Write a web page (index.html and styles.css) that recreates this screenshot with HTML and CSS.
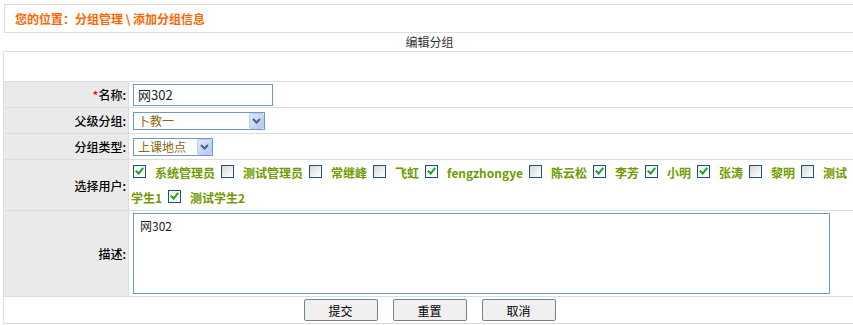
FILE: index.html
```html
<!DOCTYPE html>
<html lang="zh-CN">
<head>
    <meta charset="UTF-8">
    <meta name="viewport" content="width=device-width, initial-scale=1.0">
    <title>添加分组信息</title>
    <link rel="stylesheet" href="styles.css">
</head>
<body>
    <div class="crumb">您的位置：分组管理 \ 添加分组信息</div>

    <table class="form-table">
        <caption>编辑分组</caption>
        <colgroup>
            <col class="col-label">
            <col>
        </colgroup>
        <tr class="row-blank"><td colspan="2"></td></tr>
        <tr class="row-field">
            <th><span class="req">*</span>名称:</th>
            <td><input type="text" class="text-input" value="网302"></td>
        </tr>
        <tr class="row-field">
            <th>父级分组:</th>
            <td>
                <span class="sel sel-wide">
                    <select><option>卜教一</option></select>
                    <span class="sel-btn"><svg width="9" height="6" viewBox="0 0 9 6"><path d="M1 1 L4.5 4.5 L8 1" fill="none" stroke="#4d6185" stroke-width="2"/></svg></span>
                </span>
            </td>
        </tr>
        <tr class="row-field">
            <th>分组类型:</th>
            <td>
                <span class="sel sel-narrow">
                    <select><option>上课地点</option></select>
                    <span class="sel-btn"><svg width="9" height="6" viewBox="0 0 9 6"><path d="M1 1 L4.5 4.5 L8 1" fill="none" stroke="#4d6185" stroke-width="2"/></svg></span>
                </span>
            </td>
        </tr>
        <tr>
            <th>选择用户:</th>
            <td class="users"><input type="checkbox" class="cb" checked><span class="user">系统管理员</span><input type="checkbox" class="cb"><span class="user">测试管理员</span><input type="checkbox" class="cb"><span class="user">常继峰</span><input type="checkbox" class="cb"><span class="user">飞虹</span><input type="checkbox" class="cb" checked><span class="user">fengzhongye</span><input type="checkbox" class="cb"><span class="user">陈云松</span><input type="checkbox" class="cb" checked><span class="user">李芳</span><input type="checkbox" class="cb" checked><span class="user">小明</span><input type="checkbox" class="cb" checked><span class="user">张涛</span><input type="checkbox" class="cb"><span class="user">黎明</span><input type="checkbox" class="cb"><span class="user">测试学生1</span><input type="checkbox" class="cb" checked><span class="user">测试学生2</span></td>
        </tr>
        <tr class="row-desc">
            <th>描述:</th>
            <td><textarea class="desc">网302</textarea></td>
        </tr>
        <tr class="row-actions">
            <td colspan="2">
                <div class="actions">
                    <button type="submit" class="btn">提交</button>
                    <button type="reset" class="btn">重置</button>
                    <button type="button" class="btn">取消</button>
                </div>
            </td>
        </tr>
    </table>
</body>
</html>
```

FILE: styles.css
```css
html, body {
    overflow: hidden;
}
body {
    margin: 0;
    font-family: "Noto Sans CJK SC", "Noto Sans", sans-serif;
    font-size: 12px;
    color: #000;
    background: #fff;
}
.crumb {
    margin: 4px 0 0 4px;
    width: 860px;
    height: 27px;
    line-height: 27px;
    padding-left: 10px;
    border: 1px solid #ddd;
    color: #ff6600;
    font-weight: bold;
}
.form-table {
    margin-left: 3px;
    width: 853px;
    border-collapse: collapse;
    table-layout: fixed;
}
.form-table caption {
    height: 18px;
    line-height: 18px;
    color: #333;
}
.col-label {
    width: 125px;
}
.form-table th,
.form-table td {
    border: 1px solid #ddd;
    padding: 0;
}
.form-table th {
    background: #eaeaea;
    text-align: right;
    font-weight: 500;
    padding-right: 2px;
}
.form-table td {
    padding-left: 2px;
}
.row-blank td {
    height: 29px;
}
.row-field th,
.row-field td {
    height: 25px;
}
.row-desc th,
.row-desc td {
    height: 85px;
}
.form-table .row-actions td {
    height: 26px;
    padding: 0;
}
.req {
    color: #f00;
}
.text-input {
    box-sizing: border-box;
    width: 140px;
    height: 22px;
    margin: 0 0 0 2px;
    padding: 0 4px;
    border: 1px solid #6f99c8;
    font-family: inherit;
    font-size: 13px;
    color: #222;
    vertical-align: middle;
}
.sel {
    position: relative;
    display: inline-block;
    margin-left: 2px;
    vertical-align: middle;
}
.sel select {
    appearance: none;
    box-sizing: border-box;
    height: 18px;
    margin: 0;
    padding: 0 0 0 4px;
    border: 1px solid #6f99c8;
    border-radius: 0;
    background: #fff;
    font-family: inherit;
    font-size: 12px;
    line-height: 16px;
    color: #8b6508;
    display: block;
}
.sel-wide select {
    width: 132px;
}
.sel-narrow select {
    width: 80px;
}
.sel-btn {
    position: absolute;
    top: 1px;
    right: 1px;
    width: 15px;
    height: 16px;
    box-sizing: border-box;
    border: 1px solid #bccdf5;
    border-radius: 2px;
    background: linear-gradient(135deg, #dfe8fd, #b3c6f5);
    display: flex;
    align-items: center;
    justify-content: center;
}
.users {
    line-height: 25px;
}
.cb {
    appearance: none;
    position: relative;
    display: inline-block;
    box-sizing: border-box;
    width: 13px;
    height: 13px;
    margin: 0 9px 0 2px;
    border: 1px solid #1c5180;
    background: linear-gradient(135deg, #d8d8d2, #fff);
    vertical-align: baseline;
}
.cb:checked {
    background: linear-gradient(135deg, #f2f2ee, #fff);
}
.cb:checked::after {
    content: "";
    position: absolute;
    left: 3px;
    top: 0px;
    width: 3px;
    height: 6px;
    border-right: 2px solid #21a121;
    border-bottom: 2px solid #21a121;
    transform: rotate(40deg);
}
.user {
    margin-right: 4px;
    color: #709a00;
    font-weight: bold;
}
.desc {
    box-sizing: border-box;
    display: block;
    width: 697px;
    height: 81px;
    margin: 0 0 0 2px;
    padding: 3px 6px;
    border: 1px solid #6f99c8;
    font-family: inherit;
    font-size: 12px;
    line-height: 18px;
    color: #222;
    resize: none;
}
.actions {
    display: flex;
    justify-content: center;
    gap: 15px;
}
.btn {
    width: 74px;
    height: 22px;
    padding: 0;
    border: 1px solid #6f8595;
    border-radius: 2px;
    background: #f0f0f0;
    font-family: inherit;
    font-size: 12px;
    color: #000;
}
```
